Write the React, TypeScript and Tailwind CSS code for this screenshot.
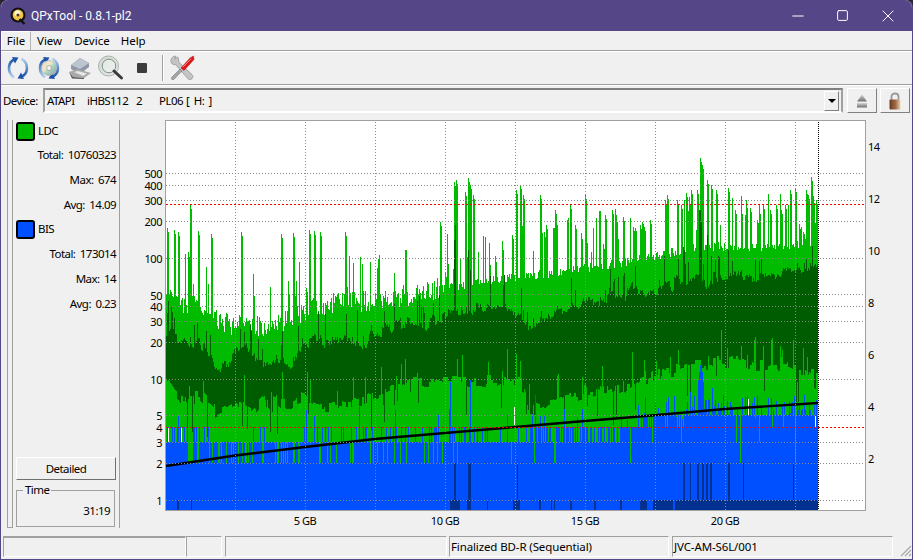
import { Minus, Square, X } from "lucide-react";

const FONT = "font-['Noto_Sans',sans-serif] text-[11.5px] text-black";
const TIGHT = "tracking-[-0.55px] [word-spacing:2px]";

// seeded so the trace comes out the same on every load
let seed = 48271;
const rnd = () => {
    seed = (seed * 16807) % 2147483647;
    return seed / 2147483647;
};

type Pt = [number, number];

const lerp = (pts: Pt[], x: number) => {
    for (let i = 1; i < pts.length; i++) {
        if (x <= pts[i][0]) {
            const [x0, y0] = pts[i - 1];
            const [x1, y1] = pts[i];
            return y0 + ((y1 - y0) * (x - x0)) / (x1 - x0);
        }
    }
    return pts[pts.length - 1][1];
};

const LIGHT_TOP: Pt[] = [[166, 300], [200, 308], [230, 325], [260, 326], [290, 320], [320, 305], [350, 302], [400, 297], [440, 288], [500, 280], [560, 272], [620, 263], [660, 255], [700, 246], [760, 247], [818, 242]];
const DARK_TOP: Pt[] = [[166, 332], [180, 340], [200, 346], [215, 372], [240, 352], [260, 360], [290, 360], [310, 345], [320, 338], [340, 340], [360, 345], [395, 326], [420, 327], [445, 315], [480, 310], [500, 305], [529, 325], [545, 318], [570, 308], [600, 297], [620, 293], [660, 285], [700, 282], [760, 275], [818, 273]];
const DARK_BOTTOM: Pt[] = [[166, 380], [180, 398], [200, 398], [215, 412], [235, 404], [250, 414], [265, 398], [280, 405], [300, 400], [320, 405], [340, 405], [365, 400], [395, 386], [410, 380], [440, 381], [520, 384], [530, 408], [545, 405], [565, 396], [600, 390], [630, 385], [650, 375], [680, 368], [740, 360], [760, 366], [818, 374]];

const PEAKS: Pt[] = [[167, 228], [174, 230], [178, 232], [190, 205], [198, 231], [211, 234], [241, 232], [281, 234], [293, 233], [309, 230], [314, 231], [320, 232], [345, 232], [440, 222], [454, 182], [456, 180], [465, 192], [468, 178], [470, 185], [473, 195], [512, 235], [516, 190], [520, 185], [523, 195], [540, 195], [546, 225], [555, 210], [570, 205], [575, 225], [585, 195], [605, 215], [612, 210], [623, 217], [633, 227], [640, 225], [643, 240], [650, 220], [665, 200], [667, 195], [677, 200], [681, 205], [686, 193], [691, 190], [697, 190], [700, 158], [702, 165], [707, 180], [711, 185], [716, 190], [728, 188], [735, 210], [741, 210], [745, 215], [750, 208], [757, 220], [763, 205], [770, 210], [776, 205], [781, 210], [785, 205], [790, 190], [795, 188], [806, 190], [808, 195], [811, 177], [816, 200]];
const DARK_PEAKS: Pt[] = [[454, 240], [455, 225], [468, 250], [470, 270], [683, 247], [684, 250], [699, 210], [700, 210], [701, 222], [707, 235], [728, 250]];
const BLUE_PEAKS: Pt[] = [[698, 380], [699, 372], [700, 365], [701, 365], [702, 372], [703, 382], [690, 392], [712, 388], [450, 382], [470, 380], [535, 395]];

// [from, to] of the dark blue marks at the foot of the chart
const FOOT: Pt[] = [[177, 179], [191, 192], [450, 460], [467, 471], [487, 488], [513, 520], [539, 541], [551, 552], [554, 555], [570, 572], [594, 596], [620, 622], [640, 647], [653, 673], [675, 818]];
const TALL: Pt[] = [[454, 456], [468, 471], [517, 518], [683, 685], [690, 691], [697, 699], [702, 704], [706, 708], [710, 712], [728, 730], [743, 744], [793, 794]];

const buildTrace = () => {
    const light: string[] = [];
    const dark: string[] = [];
    const blue: string[] = [];
    const navy: string[] = [];
    const peak = new Map(PEAKS);
    const darkPeak = new Map(DARK_PEAKS);
    const bluePeak = new Map(BLUE_PEAKS);
    let hold = 0;
    let holdT = 0;
    let holdB = 0;
    let drift = 0;
    let prevSpike = 0;

    for (let x = 166; x < 818; x++) {
        const cx = x + 0.5;
        if (hold-- <= 0) {
            hold = Math.floor(rnd() * 4);
            drift = drift * 0.6 + (rnd() - 0.5) * 9;
            holdT = drift + (rnd() - 0.5) * 8;
            holdB = drift * 0.6 + (rnd() - 0.5) * 11;
        }

        // light green: jagged top edge plus spikes, often two columns wide
        let t1 = lerp(LIGHT_TOP, x) + (rnd() - 0.5) * (x < 440 ? 22 : 9);
        const sp = x < 440 ? 0.09 : 0.18;
        let spike = 0;
        if (rnd() < sp) spike = 10 + rnd() * (x < 440 ? 45 : 48);
        else if (prevSpike > 0 && rnd() < 0.35) spike = prevSpike * (0.7 + rnd() * 0.4);
        prevSpike = spike;
        t1 -= spike;
        if (peak.has(x)) t1 = Math.min(t1, peak.get(x)!);
        if (peak.has(x - 1)) t1 = Math.min(t1, peak.get(x - 1)! + 4);
        light.push(`M${cx} ${Math.round(t1)}V510`);

        // dark green band
        let t2 = Math.round(lerp(DARK_TOP, x) + holdT + (rnd() - 0.5) * 5);
        let b2 = Math.round(lerp(DARK_BOTTOM, x) + holdB);
        if (rnd() < 0.09) t2 -= 6 + rnd() * 24;
        if (rnd() < 0.08) b2 -= 8 + rnd() * 22;
        if (rnd() < 0.06) b2 = Math.round(b2 + 10 + rnd() * 28);
        if (x >= 640 && rnd() < 0.05) b2 -= 14;
        if (darkPeak.has(x)) t2 = darkPeak.get(x)!;
        dark.push(`M${cx} ${t2}V${b2}`);

        // blue settles on the quantised levels 2/3/4/5
        const r = rnd();
        const p442 = x < 183 ? 1 : x < 300 ? 0.72 : x < 440 ? 0.88 : x < 600 ? 0.97 : 0.99;
        const p427 = x < 200 ? 0.5 : x < 300 ? 0.04 : x < 530 ? 0.28 : x < 620 ? 0.62 : 0.98;
        const p415 = x < 640 ? 0.03 : x < 700 ? 0.72 : 0.92;
        let tb = 463;
        if (r < p442) tb = 442;
        if (rnd() < p427 && tb === 442) tb = 427;
        if (rnd() < p415 && tb === 427) tb = 415;
        if (tb <= 427 && rnd() < (x < 640 ? 0.1 : 0.3)) tb = Math.round(tb - 4 - rnd() * 16);
        if (bluePeak.has(x)) tb = bluePeak.get(x)!;
        blue.push(`M${cx} ${tb}V510`);
    }

    FOOT.forEach(([a, b]) => {
        for (let x = a; x < b; x++) navy.push(`M${x + 0.5} 500V510`);
    });
    TALL.forEach(([a, b]) => {
        for (let x = a; x < b; x++) navy.push(`M${x + 0.5} 463V510`);
    });
    return { light: light.join(""), dark: dark.join(""), blue: blue.join(""), navy: navy.join("") };
};

const trace = buildTrace();

const H_LINES = [173, 185, 200, 221, 258, 294, 306, 321, 342, 379, 415, 442, 463, 500];
const V_LINES = [235, 305, 375, 445, 515, 585, 655, 725, 795];
const LEFT_TICKS: [string, number][] = [["500", 174], ["400", 186], ["300", 201], ["200", 222], ["100", 259], ["50", 296], ["40", 307], ["30", 322], ["20", 343], ["10", 380], ["5", 416], ["4", 428], ["3", 443], ["2", 464], ["1", 501]];
const RIGHT_TICKS: [string, number][] = [["14", 147], ["12", 199], ["10", 251], ["8", 303], ["6", 355], ["4", 407], ["2", 459]];
const X_TICKS: [string, number][] = [["5 GB", 305], ["10 GB", 445], ["15 GB", 585], ["20 GB", 725]];

function Chart() {
    return (
        <svg width={788} height={412} viewBox="125 120 788 412" className={`shrink-0 ${FONT} text-[11px] tracking-[-0.45px]`}>
            <rect x={165.5} y={120.5} width={700} height={390} fill="#ffffff" stroke="#a0a0a0" strokeWidth={1} />
            <g shapeRendering="crispEdges" fill="none" strokeWidth={1}>
                <path d={trace.light} stroke="#00bb00" />
                <path d={trace.dark} stroke="#005c00" />
                <path d={trace.blue} stroke="#0050ff" />
                <path d={trace.navy} stroke="#003090" />
                <path d="M514.5 407V425M748.5 399V415M815.5 416V427M168.5 428V442M181.5 428V442" stroke="#ffffff" />
            </g>
            <polyline
                points="166,466 235,455.5 305,447 375,439 445,433 515,427 585,421 640,416.5 725,409 818,403"
                fill="none"
                stroke="#000000"
                strokeWidth={2.4}
            />
            <g shapeRendering="crispEdges" strokeWidth={1}>
                <g strokeDasharray="1 2">
                    {H_LINES.map((y) => (
                        <line key={y} x1={166} x2={865} y1={y + 0.5} y2={y + 0.5} stroke="#8a8a8a" />
                    ))}
                    {V_LINES.map((x) => (
                        <line key={x} x1={x + 0.5} x2={x + 0.5} y1={122} y2={510} stroke="#8a8a8a" />
                    ))}
                </g>
                <g strokeDasharray="2 2">
                    <line x1={166} x2={865} y1={204.5} y2={204.5} stroke="#ff0000" />
                    <line x1={166} x2={865} y1={427.5} y2={427.5} stroke="#ff0000" />
                </g>
            </g>
            <line x1={818.5} x2={818.5} y1={122} y2={510} stroke="#000000" strokeDasharray="1 1" shapeRendering="crispEdges" />
            <g fill="#000000">
                {LEFT_TICKS.map(([label, y]) => (
                    <text key={label + y} x={162} y={y + 4} textAnchor="end">
                        {label}
                    </text>
                ))}
                {RIGHT_TICKS.map(([label, y]) => (
                    <text key={label + y} x={868} y={y + 4}>
                        {label}
                    </text>
                ))}
                {X_TICKS.map(([label, x]) => (
                    <text key={label} x={x} y={525} textAnchor="middle">
                        {label}
                    </text>
                ))}
            </g>
        </svg>
    );
}

function AppLogo() {
    return (
        <svg width={16} height={18} viewBox="0 0 16 18" className="shrink-0">
            <circle cx={8} cy={8} r={7.5} fill="#111" />
            <circle cx={8} cy={8} r={5.4} fill="#f4c542" />
            <circle cx={7.4} cy={6.6} r={3} fill="#fff7dc" />
            <circle cx={8} cy={8} r={1.6} fill="#5a3a12" />
            <path d="M9.5 12 L14.5 17" stroke="#111" strokeWidth={2.4} />
        </svg>
    );
}

function RefreshArcs({ id }: { id: string }) {
    return (
        <>
            <defs>
                <linearGradient id={`${id}a`} x1="0" y1="0" x2="0" y2="1">
                    <stop offset="0" stopColor="#1c54a8" />
                    <stop offset="1" stopColor="#b5d2ee" />
                </linearGradient>
                <linearGradient id={`${id}b`} x1="0" y1="0" x2="0" y2="1">
                    <stop offset="0" stopColor="#b5d2ee" />
                    <stop offset="1" stopColor="#1c54a8" />
                </linearGradient>
            </defs>
            <path d="M8.5 3.5 C2 6 0.5 16 8 21.5" fill="none" stroke={`url(#${id}a)`} strokeWidth={2.6} />
            <path d="M6 1 L12.5 1.5 L9 7.5 Z" fill="#1c54a8" />
            <path d="M15.5 2.5 C23.5 8 22 18 15.5 20.5" fill="none" stroke={`url(#${id}b)`} strokeWidth={2.6} />
            <path d="M18 23 L11.5 22.5 L15 16.5 Z" fill="#1c54a8" />
        </>
    );
}

function ReloadIcon() {
    return (
        <svg width={24} height={24} viewBox="0 0 24 24">
            <RefreshArcs id="rl" />
        </svg>
    );
}

function DiscIcon() {
    return (
        <svg width={24} height={24} viewBox="0 0 24 24">
            <RefreshArcs id="dc" />
            <defs>
                <linearGradient id="cd1" x1="0" y1="0" x2="1" y2="1">
                    <stop offset="0" stopColor="#d8d8d8" />
                    <stop offset="0.4" stopColor="#f0e8c8" />
                    <stop offset="0.55" stopColor="#a8d8c0" />
                    <stop offset="1" stopColor="#9a9aa4" />
                </linearGradient>
            </defs>
            <circle cx={12} cy={12} r={7.5} fill="url(#cd1)" stroke="#9a9a9a" strokeWidth={0.5} />
            <circle cx={12} cy={12} r={2.4} fill="#f4f4f4" stroke="#8a8a8a" strokeWidth={0.6} />
        </svg>
    );
}

function DriveIcon() {
    return (
        <svg width={24} height={24} viewBox="0 0 24 24">
            <path d="M3 9 L12 2 L21 7 L21 11 L12 18 L3 13 Z" fill="#8d97a6" />
            <path d="M3 9 L12 2 L21 7 L12 13 Z" fill="#bcc4d0" />
            <path d="M1 16 L9 13 L23 17 L16 22 L5 21 Z" fill="#a9a9a9" />
            <path d="M6 16 L10 15 L19 17.5 L15 20 Z" fill="#e6e6e6" />
            <path d="M1 16 L5 21 L16 22 L16 23 L4 22.5 Z" fill="#555555" />
        </svg>
    );
}

function ScanIcon() {
    return (
        <svg width={26} height={26} viewBox="0 0 26 26">
            <defs>
                <linearGradient id="cd2" x1="0" y1="0" x2="1" y2="1">
                    <stop offset="0" stopColor="#d9c8dc" />
                    <stop offset="0.35" stopColor="#cfe4d2" />
                    <stop offset="1" stopColor="#e8e8e8" />
                </linearGradient>
            </defs>
            <circle cx={10.5} cy={11} r={10} fill="url(#cd2)" stroke="#b0b0b0" />
            <circle cx={11} cy={11} r={6.8} fill="#f2f2f2" fillOpacity={0.6} stroke="#8a8a8a" strokeWidth={1} />
            <path d="M16 16 L23.5 23" stroke="#3a3a3a" strokeWidth={3} strokeLinecap="round" />
        </svg>
    );
}

function ToolsIcon() {
    return (
        <svg width={26} height={26} viewBox="0 0 26 26">
            <path d="M6.5 1 C2.5 1.5 1 5 2.4 8 C3.4 9.4 5 9.8 6.6 9.6 L18.8 23.6 C20 25 22.4 24.6 23.2 23.4 C24.2 22 24 20.6 23 19.6 L9.6 7 C10 5.2 9.6 3 8.4 1.8 L6 4.2 Z" fill="#c4c4c4" stroke="#808080" strokeWidth={0.6} />
            <path d="M2.5 22.5 L11 14 L13 16 L4.8 24.5 L2.8 24.5 Z" fill="#a4a4a4" stroke="#707070" strokeWidth={0.5} />
            <path d="M12 13 L21 3 L24.5 1 L25 4.5 L15 15.5 Z" fill="#e01818" stroke="#a81212" strokeWidth={0.5} />
            <path d="M14 12 L22 3.8" stroke="#ff9a9a" strokeWidth={0.9} />
        </svg>
    );
}

function EjectIcon() {
    return (
        <svg width={12} height={14} viewBox="0 0 12 14">
            <defs>
                <linearGradient id="ej" x1="0" y1="0" x2="0" y2="1">
                    <stop offset="0" stopColor="#d4d4d4" />
                    <stop offset="1" stopColor="#6e6e6e" />
                </linearGradient>
            </defs>
            <path d="M6 0.5 L11 7.5 L1 7.5 Z" fill="url(#ej)" />
            <rect x={1} y={9} width={10} height={4.5} fill="url(#ej)" />
        </svg>
    );
}

function LockIcon() {
    return (
        <svg width={12} height={18} viewBox="0 0 12 18">
            <defs>
                <linearGradient id="lk" x1="0" y1="0" x2="1" y2="0">
                    <stop offset="0" stopColor="#6a3a20" />
                    <stop offset="0.55" stopColor="#a06a44" />
                    <stop offset="1" stopColor="#e6d4b8" />
                </linearGradient>
            </defs>
            <path d="M2.5 8 V4.5 C2.5 0.5 9.5 0.5 9.5 4.5 V8" fill="none" stroke="#9a9a9a" strokeWidth={1.8} />
            <rect x={0.5} y={7.5} width={11} height={10} rx={1} fill="url(#lk)" />
        </svg>
    );
}

function TitleBar() {
    return (
        <div className="flex h-[31px] shrink-0 items-center bg-[#544687] pl-[9px] pr-[2px] text-white">
            <AppLogo />
            <span className="ml-[5px] font-['Roboto',sans-serif] text-[12px]">QPxTool - 0.8.1-pl2</span>
            <div className="ml-auto flex">
                <div className="flex h-[31px] w-[45px] items-center justify-center">
                    <Minus size={18} strokeWidth={1} absoluteStrokeWidth />
                </div>
                <div className="flex h-[31px] w-[45px] items-center justify-center">
                    <Square size={13} strokeWidth={1} absoluteStrokeWidth />
                </div>
                <div className="flex h-[31px] w-[45px] items-center justify-center">
                    <X size={20} strokeWidth={1} absoluteStrokeWidth />
                </div>
            </div>
        </div>
    );
}

function MenuBar() {
    return (
        <div className={`flex h-[20px] shrink-0 items-stretch border-b border-b-[#a0a0a0] ${FONT}`}>
            <span className="flex w-[30px] items-center justify-center border-l border-t border-r border-white border-r-[#b4b4b4]">File</span>
            <span className="ml-[6px] flex items-center">View</span>
            <span className="ml-[12px] flex items-center">Device</span>
            <span className="ml-[11px] flex items-center">Help</span>
        </div>
    );
}

function Toolbar() {
    return (
        <div className="flex h-[34px] shrink-0 items-center border-t border-b border-t-white border-b-[#a0a0a0] pl-[5px]">
            <ReloadIcon />
            <div className="ml-[7px]">
                <DiscIcon />
            </div>
            <div className="ml-[7px]">
                <DriveIcon />
            </div>
            <div className="ml-[6px]">
                <ScanIcon />
            </div>
            <div className="ml-[13px] h-[10px] w-[10px] rounded-[1px] bg-[#3c3c3c]" />
            <div className="ml-[15px] h-[26px] w-[2px] border-l border-r border-l-[#a0a0a0] border-r-white" />
            <div className="ml-[5px]">
                <ToolsIcon />
            </div>
        </div>
    );
}

function DeviceRow() {
    return (
        <div className={`flex h-[35px] shrink-0 items-start border-t border-t-white pl-[2px] pt-[2px] ${FONT}`}>
            <span className={`flex h-[25px] w-[40px] items-center ${TIGHT}`}>Device:</span>
            <div className={`flex h-[25px] w-[800px] items-center border-2 border-t-[#808080] border-l-[#a0a0a0] border-b-white border-r-[#a0a0a0] pl-[2px] pr-[2px] ${TIGHT}`}>
                <span className="w-[40px]">ATAPI</span>
                <span className="w-[49px]">iHBS112</span>
                <span className="w-[23px]">2</span>
                <span className="w-[27px]">PL06</span>
                <span className="whitespace-pre">[ H: ]</span>
                <div className="ml-auto flex h-[20px] w-[15px] items-center justify-center border border-t-white border-l-white border-b-[#808080] border-r-[#808080]">
                    <div className="h-0 w-0 border-x-[4px] border-t-[4px] border-x-transparent border-t-black" />
                </div>
            </div>
            <button className="ml-[4px] flex h-[25px] w-[30px] items-center justify-center border border-t-white border-l-white border-b-[#808080] border-r-[#808080]">
                <EjectIcon />
            </button>
            <button className="ml-[3px] flex h-[25px] w-[30px] items-center justify-center border border-t-white border-l-white border-b-[#808080] border-r-[#808080]">
                <LockIcon />
            </button>
        </div>
    );
}

function StatRow({ label, value }: { label: string; value: string }) {
    return (
        <div className={`flex h-[25px] items-center justify-end whitespace-pre ${TIGHT}`}>
            {label}: {value}
        </div>
    );
}

function Legend({ color, label, height }: { color: string; label: string; height: string }) {
    return (
        <div className={`flex items-center pl-[3px] ${height}`}>
            <div className={`h-[19px] w-[19px] rounded-[3px] border-2 border-black ${color}`} />
            <span className={`ml-[3px] ${TIGHT}`}>{label}</span>
        </div>
    );
}

function SidePanel() {
    return (
        <div className={`ml-[6px] flex h-[408px] w-[113px] shrink-0 ${FONT}`}>
            <div className="w-[6px] border-x border-b border-[#a0a0a0]" />
            <div className="flex w-[107px] flex-col border-r border-[#a0a0a0] pb-[1px] pr-[3px]">
                <Legend color="bg-[#00bb00]" label="LDC" height="h-[22px]" />
                <StatRow label="Total" value="10760323" />
                <StatRow label="Max" value="674" />
                <StatRow label="Avg" value="14.09" />
                <Legend color="bg-[#0050ff]" label="BIS" height="h-[24px]" />
                <StatRow label="Total" value="173014" />
                <StatRow label="Max" value="14" />
                <StatRow label="Avg" value="0.23" />
                <button className={`ml-[3px] mt-auto flex h-[23px] w-[100px] items-center justify-center border border-t-white border-l-white border-b-[#707070] border-r-[#707070] ${TIGHT}`}>
                    Detailed
                </button>
                <fieldset className={`ml-[3px] mt-[4px] h-[43px] w-[99px] border border-[#a0a0a0] pl-[6px] pr-[4px] ${TIGHT}`}>
                    <legend className="px-[2px] leading-[12px]">Time</legend>
                    <div className="mt-[6px] text-right">31:19</div>
                </fieldset>
            </div>
        </div>
    );
}

function StatusCell({ className, text }: { className: string; text?: string }) {
    return (
        <div className={`flex h-full items-center border-l border-t border-b border-r border-t-[#a0a0a0] border-l-[#a0a0a0] border-b-white border-r-white pl-[1px] ${className}`}>
            {text}
        </div>
    );
}

function StatusBar() {
    return (
        <div className={`mt-[4px] flex h-[21px] shrink-0 items-stretch pl-[2px] tracking-[-0.12px] ${FONT}`}>
            <StatusCell className="w-[183px] border-t-2" />
            <StatusCell className="w-[36px]" />
            <StatusCell className="ml-[3px] w-[222px]" />
            <StatusCell className="ml-[2px] w-[220px]" text="Finalized BD-R (Sequential)" />
            <StatusCell className="ml-[3px] w-[221px]" text="JVC-AM-S6L/001" />
            <svg width={14} height={14} viewBox="0 0 14 14" className="ml-auto mt-[7px] shrink-0">
                <path d="M13 3 L3 13 M13 7 L7 13 M13 11 L11 13" stroke="#a8a8a8" strokeWidth={1.2} />
            </svg>
        </div>
    );
}

export default function App() {
    return (
        <div className="h-[560px] w-[913px] overflow-hidden bg-[#2c2430]">
            <div className="flex h-[560px] w-[913px] flex-col overflow-hidden rounded-t-[8px] border-x border-b border-[#544687] bg-[#f0f0f0]">
                <TitleBar />
                <MenuBar />
                <Toolbar />
                <DeviceRow />
                <div className="flex h-[412px] shrink-0 items-start">
                    <SidePanel />
                    <div className="w-[5px] shrink-0" />
                    <Chart />
                </div>
                <StatusBar />
            </div>
        </div>
    );
}
